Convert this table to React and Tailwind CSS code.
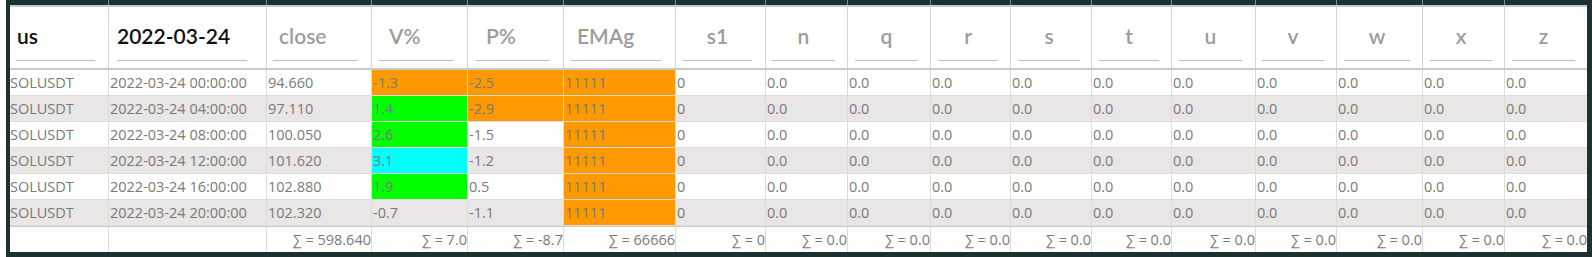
import React from "react";

const GRID =
  "grid grid-cols-[99px_158px_105px_96px_96px_112px_90px_82px_83px_80px_81px_80px_84px_81px_86px_82px_82px]";

const headers = [
  { label: "us", dark: true, cell: "pl-[6px] pr-[13px]", lab: "pl-[1px]" },
  { label: "2022-03-24", dark: true, cell: "pl-[8px] pr-[19px]", lab: "pl-0" },
  { label: "close", cell: "pl-[6px] pr-[13px]", lab: "pl-[6px]" },
  { label: "V%", cell: "pl-[7px] pr-[13px]", lab: "pl-[10px]" },
  { label: "P%", cell: "pl-[8px] pr-[13px]", lab: "pl-[10px]" },
  { label: "EMAg", cell: "pl-[7px] pr-[14px]", lab: "pl-[6px]" },
  { label: "s1", center: true, cell: "pl-[7px] pr-[13px]" },
  { label: "n", center: true, cell: "pl-[6px] pr-[12px]" },
  { label: "q", center: true, cell: "pl-[7px] pr-[12px]" },
  { label: "r", center: true, cell: "pl-[7px] pr-[12px]" },
  { label: "s", center: true, cell: "pl-[7px] pr-[11px]" },
  { label: "t", center: true, cell: "pl-[7px] pr-[12px]" },
  { label: "u", center: true, cell: "pl-[7px] pr-[13px]" },
  { label: "v", center: true, cell: "pl-[6px] pr-[12px]" },
  { label: "w", center: true, cell: "pl-[7px] pr-[12px]" },
  { label: "x", center: true, cell: "pl-[7px] pr-[12px]" },
  { label: "z", center: true, cell: "pl-[7px] pr-[12px]" },
];

const times = ["00:00:00", "04:00:00", "08:00:00", "12:00:00", "16:00:00", "20:00:00"];
const closes = ["94.660", "97.110", "100.050", "101.620", "102.880", "102.320"];
const vs = ["-1.3", "1.4", "2.6", "3.1", "1.9", "-0.7"];
const ps = ["-2.5", "-2.9", "-1.5", "-1.2", "0.5", "-1.1"];
const vColors = ["bg-[#ff9900]", "bg-[#00ff00]", "bg-[#00ff00]", "bg-[#00ffff]", "bg-[#00ff00]", ""];
const pColors = ["bg-[#ff9900]", "bg-[#ff9900]", "", "", "", ""];

const rows = times.map((t, i) => ({
  cells: [
    { v: "SOLUSDT", pl: "pl-0" },
    { v: "2022-03-24 " + t },
    { v: closes[i] },
    { v: vs[i], bg: vColors[i] },
    { v: ps[i], bg: pColors[i] },
    { v: "11111", bg: "bg-[#ff9900]" },
    { v: "0" },
    ...Array.from({ length: 10 }, () => ({ v: "0.0" })),
  ],
  even: i % 2 === 1,
}));

const footer = [
  "",
  "",
  "∑ = 598.640",
  "∑ = 7.0",
  "∑ = -8.7",
  "∑ = 66666",
  "∑ = 0",
  ...Array.from({ length: 10 }, () => "∑ = 0.0"),
];

export default function App() {
  return (
    <div className="w-[1592px] h-[257px] bg-white pl-[6px] overflow-hidden">
      <div className="bg-[#1c3131] pl-[4px] pr-[5px] pb-[5px] h-[257px]">
        {/* top dark band with column lines */}
        <div className={`${GRID} h-[5px]`}>
          {headers.map((h, i) => (
            <div key={i} className="border-r border-[#7f8c8c] last:border-r-0" />
          ))}
        </div>
        <div className="bg-white">
          <div className="h-[2px] bg-[#c9c9c9]" />
          {/* header */}
          <div className={`${GRID} h-[61px] font-['Lato',sans-serif] border-b-2 border-[#c9c9c9] box-content`}>
            {headers.map((h, i) => (
              <div key={i} className={`h-[61px] border-r border-[#d4d4d4] last:border-r-0 ${h.cell}`}>
                <div
                  className={`mt-[8px] h-[46px] pb-[3px] border-b border-[#bdbdbd] flex items-center text-[21px] font-semibold ${
                    h.center ? "justify-center" : ""
                  } ${h.dark ? "text-[#111111]" : "text-[#9c9c9c]"} ${h.lab || ""}`}
                >
                  {h.label}
                </div>
              </div>
            ))}
          </div>
          {/* rows */}
          <div className="font-['Open_Sans',sans-serif] text-[14.5px] text-[#7a7a7a]">
            {rows.map((r, ri) => (
              <div key={ri} className={`${GRID} h-[26px] ${r.even ? "bg-[#e9e6e5]" : "bg-white"}`}>
                {r.cells.map((c, ci) => (
                  <div
                    key={ci}
                    className={`h-[26px] border-r border-b border-[#dcdcdc] last:border-r-0 flex items-center whitespace-nowrap overflow-hidden ${
                      c.pl || "pl-[1px]"
                    } ${c.bg || ""}`}
                  >
                    {c.v}
                  </div>
                ))}
              </div>
            ))}
            <div className={`${GRID} h-[26px] bg-white border-t border-[#c9c9c9]`}>
              {footer.map((f, i) => (
                <div
                  key={i}
                  className="h-[25px] border-r border-[#dcdcdc] last:border-r-0 flex items-center justify-end whitespace-nowrap"
                >
                  {f}
                </div>
              ))}
            </div>
          </div>
        </div>
      </div>
    </div>
  );
}
